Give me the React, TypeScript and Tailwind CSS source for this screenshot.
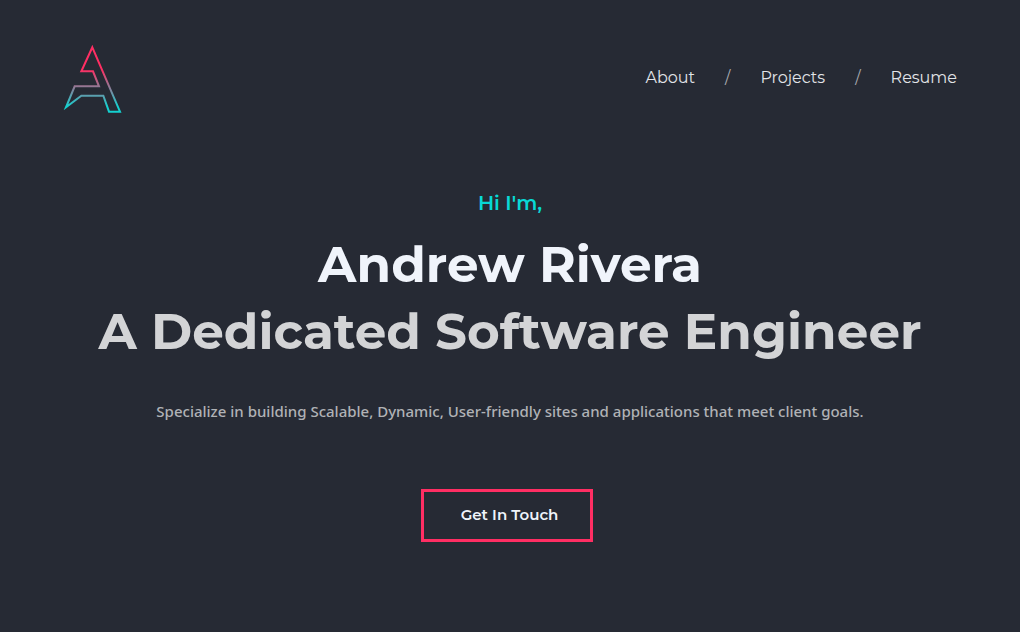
import { Fragment } from "react";

const links = ["About", "Projects", "Resume"];

function Logo() {
  return (
    <svg viewBox="27 24 180 210" className="h-[70px] w-[60px]" fill="none" aria-hidden="true">
      <defs>
        <linearGradient id="logo-stroke" x1="0" y1="30" x2="0" y2="228" gradientUnits="userSpaceOnUse">
          <stop offset="0.36" stopColor="#ff2e63" />
          <stop offset="0.92" stopColor="#14d0cf" />
        </linearGradient>
      </defs>
      <path
        d="M115 34 L198 227 H165 L148 179 H82 L36 214 L62 151 H135 L117 106 H82 Z"
        stroke="url(#logo-stroke)"
        strokeWidth="6"
      />
    </svg>
  );
}

export default function App() {
  return (
    <div className="min-h-screen bg-[#262a34] font-['Montserrat','Inter',sans-serif]">
      <header className="flex items-start justify-between px-[63px] pt-11">
        <a href="#home" aria-label="Home">
          <Logo />
        </a>
        <nav className="flex gap-[30px] pt-[22px] text-[16px] leading-6 text-[#e2e4e8]">
          {links.map((link, i) => (
            <Fragment key={link}>
              {i > 0 && <span className="text-[#a6a9af]">/</span>}
              <a href={"#" + link.toLowerCase()}>{link}</a>
            </Fragment>
          ))}
        </nav>
      </header>
      <main className="flex flex-col items-center pt-[75px] pb-20 text-center">
        <p className="text-[20px] leading-7 font-semibold text-[#08d9d6]">Hi I'm,</p>
        <h1 className="pt-3.5 text-[50px] leading-[67px] font-bold text-[#f0f4fb]">
          Andrew Rivera
          <span className="block text-[#d3d4d6]">A Dedicated Software Engineer</span>
        </h1>
        <p className="pt-[34px] font-['Noto_Sans',sans-serif] text-[15px] leading-6 font-medium text-[#b0b2b6]">
          Specialize in building Scalable, Dynamic, User-friendly sites and applications that meet client goals.
        </p>
        <button
          type="button"
          className="mt-[66px] mr-1.5 border-3 border-[#ff2e63] pt-[11px] pb-3 pr-8 pl-[37px] text-[15px] leading-6 font-semibold text-[#f0f4fb]"
        >
          Get In Touch
        </button>
      </main>
    </div>
  );
}
